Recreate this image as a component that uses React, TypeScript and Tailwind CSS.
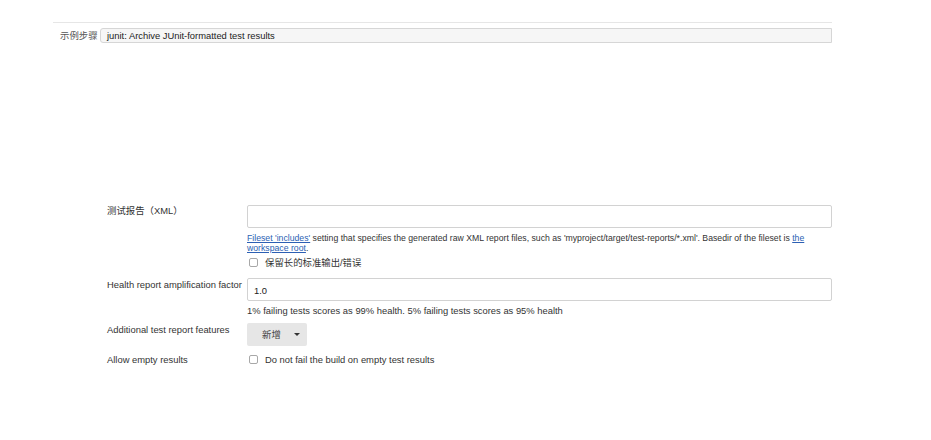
import React from "react";

const font = { fontFamily: '"Liberation Sans", Arial, "Noto Sans CJK SC", sans-serif' };

function Box() {
  return <span className="inline-block w-[9px] h-[9px] rounded-[2px] border border-[#a8a8a8] bg-white shrink-0" />;
}

export default function App() {
  return (
    <div className="w-[931px] h-[440px] bg-white text-[#333] text-[9.4px] leading-[11px]" style={font}>
      <div className="pt-[22px]">
        <div className="ml-[53px] w-[779px] border-t border-[#e6e6e6]" />
        <div className="flex items-center mt-[5px]">
          <span className="ml-[60px] w-[40px] text-[#555]">示例步骤</span>
          <div className="w-[732px] h-[15px] flex items-center pl-[6px] bg-[#f6f6f6] border border-[#d6d6d6] rounded-l-[3px] text-[#222]">
            junit: Archive JUnit-formatted test results
          </div>
        </div>
      </div>

      <div className="mt-[162px] ml-[107px] w-[725px]">
        {/* Row 1 */}
        <div className="flex">
          <div className="w-[140px]">测试报告（XML）</div>
          <div className="flex-1">
            <div className="h-[23px] border border-[#d2d2d2] rounded-[2px] bg-white" />
            <div className="mt-[5px] leading-[10px] text-[8.7px] pr-[20px]">
              <a className="text-[#2c5fb3] underline">Fileset 'includes'</a> setting that specifies the generated raw XML report files, such as 'myproject/target/test-reports/*.xml'. Basedir of the fileset is{" "}
              <a className="text-[#2c5fb3] underline">the workspace root</a>.
            </div>
            <div className="flex items-center mt-[4px] ml-[2px] gap-[7px]">
              <Box />
              <span>保留长的标准输出/错误</span>
            </div>
          </div>
        </div>

        {/* Row 2 */}
        <div className="flex mt-[10px]">
          <div className="w-[140px] pt-[1px] whitespace-nowrap">Health report amplification factor</div>
          <div className="flex-1">
            <div className="h-[23px] border border-[#d2d2d2] rounded-[2px] bg-white flex items-center pl-[6px] pt-[2px] text-[#222]">1.0</div>
            <div className="mt-[4px]">1% failing tests scores as 99% health. 5% failing tests scores as 95% health</div>
          </div>
        </div>

        {/* Row 3 */}
        <div className="flex mt-[7px]">
          <div className="w-[140px] pt-[1px]">Additional test report features</div>
          <div className="flex-1">
            <div className="w-[60px] h-[23px] bg-[#e6e6e6] rounded-[2px] flex items-center pl-[15px] gap-[13px] text-[#444]">
              <span>新增</span>
              <span className="inline-block w-0 h-0 border-l-[3px] border-r-[3px] border-t-[3.5px] border-l-transparent border-r-transparent border-t-[#333]" />
            </div>
          </div>
        </div>

        {/* Row 4 */}
        <div className="flex mt-[8px] items-center">
          <div className="w-[140px]">Allow empty results</div>
          <div className="flex items-center ml-[2px] gap-[7px]">
            <Box />
            <span>Do not fail the build on empty test results</span>
          </div>
        </div>
      </div>
    </div>
  );
}
